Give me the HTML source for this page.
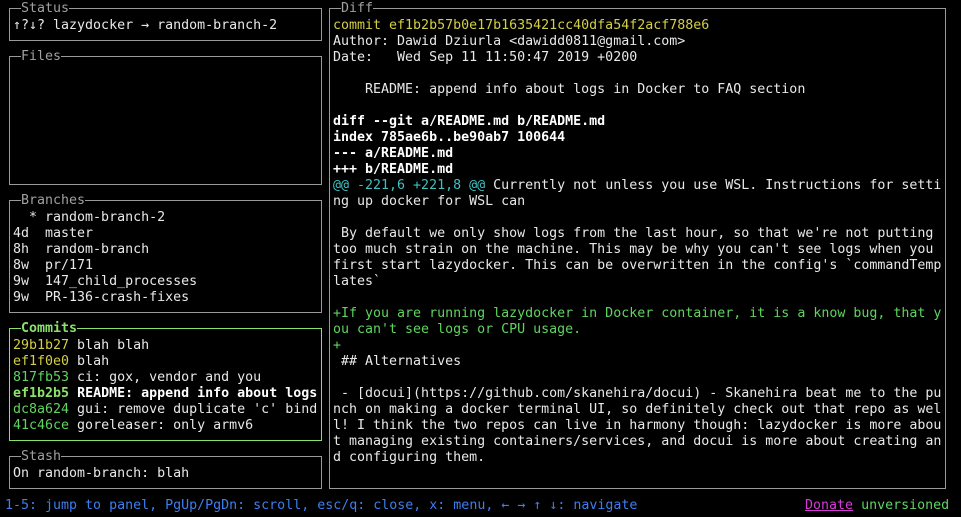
<!DOCTYPE html>
<html><head><meta charset="utf-8"><style>
html,body{margin:0;padding:0;background:#000;width:961px;height:517px;overflow:hidden}
*{box-sizing:border-box}
.box{position:absolute;border:1px solid #9a9a9a}
.t{position:absolute;background:#000;color:#a0a0a0;font:13.3px/16px "DejaVu Sans Mono","Liberation Mono",monospace;padding:0;white-space:pre;margin-top:1px}
pre{position:absolute;margin:0;margin-top:2px;font:13.3px/16px "DejaVu Sans Mono","Liberation Mono",monospace;color:#e8e8e8;white-space:pre}
.y{color:#d4cf45}.g{color:#5fd45f}.c{color:#3fc1c1}.b{font-weight:bold;color:#fff}.bg{font-weight:bold;color:#8be26b}
.bl{color:#3d7ef0}.m{color:#d63bd6;text-decoration:underline}
</style></head><body>
<div class="box" style="left:9px;top:8px;width:313px;height:33px"></div>
<div class="t" style="left:21px;top:0">Status</div>
<pre style="left:13px;top:16px">↑?↓? lazydocker → random-branch-2</pre>

<div class="box" style="left:9px;top:56px;width:313px;height:129px"></div>
<div class="t" style="left:21px;top:48px">Files</div>

<div class="box" style="left:9px;top:200px;width:313px;height:113px"></div>
<div class="t" style="left:21px;top:192px">Branches</div>
<pre style="left:13px;top:208px">  * random-branch-2
4d  master
8h  random-branch
8w  pr/171
9w  147_child_processes
9w  PR-136-crash-fixes</pre>

<div class="box" style="left:9px;top:328px;width:313px;height:113px;border-color:#8be26b"></div>
<div class="t" style="left:21px;top:320px;color:#8be26b;font-weight:bold">Commits</div>
<pre style="left:13px;top:336px"><span class="y">29b1b27</span> blah blah
<span class="y">ef1f0e0</span> blah
<span class="g">817fb53</span> ci: gox, vendor and you
<span class="bg">ef1b2b5</span> <span class="b">README: append info about logs</span>
<span class="g">dc8a624</span> gui: remove duplicate 'c' bind
<span class="g">41c46ce</span> goreleaser: only armv6</pre>

<div class="box" style="left:9px;top:456px;width:313px;height:33px"></div>
<div class="t" style="left:21px;top:448px">Stash</div>
<pre style="left:13px;top:464px">On random-branch: blah</pre>

<div class="box" style="left:329px;top:8px;width:617px;height:481px"></div>
<div class="t" style="left:341px;top:0">Diff</div>
<pre style="left:333px;top:16px"><span class="y">commit ef1b2b57b0e17b1635421cc40dfa54f2acf788e6</span>
Author: Dawid Dziurla &lt;dawidd0811@gmail.com&gt;
Date:   Wed Sep 11 11:50:47 2019 +0200

    README: append info about logs in Docker to FAQ section

<span class="b">diff --git a/README.md b/README.md</span>
<span class="b">index 785ae6b..be90ab7 100644</span>
<span class="b">--- a/README.md</span>
<span class="b">+++ b/README.md</span>
<span class="c">@@ -221,6 +221,8 @@</span> Currently not unless you use WSL. Instructions for setti
ng up docker for WSL can

 By default we only show logs from the last hour, so that we're not putting
too much strain on the machine. This may be why you can't see logs when you
first start lazydocker. This can be overwritten in the config's `commandTemp
lates`

<span class="g">+If you are running lazydocker in Docker container, it is a know bug, that y</span>
<span class="g">ou can't see logs or CPU usage.</span>
<span class="g">+</span>
 ## Alternatives

 - [docui](https://github.com/skanehira/docui) - Skanehira beat me to the pu
nch on making a docker terminal UI, so definitely check out that repo as wel
l! I think the two repos can live in harmony though: lazydocker is more abou
t managing existing containers/services, and docui is more about creating an
d configuring them.</pre>

<pre style="left:5px;top:496px" class="bl">1-5: jump to panel, PgUp/PgDn: scroll, esc/q: close, x: menu, ← → ↑ ↓: navigate</pre>
<pre style="left:805px;top:496px"><span class="m">Donate</span> <span class="g">unversioned</span></pre>
</body></html>
